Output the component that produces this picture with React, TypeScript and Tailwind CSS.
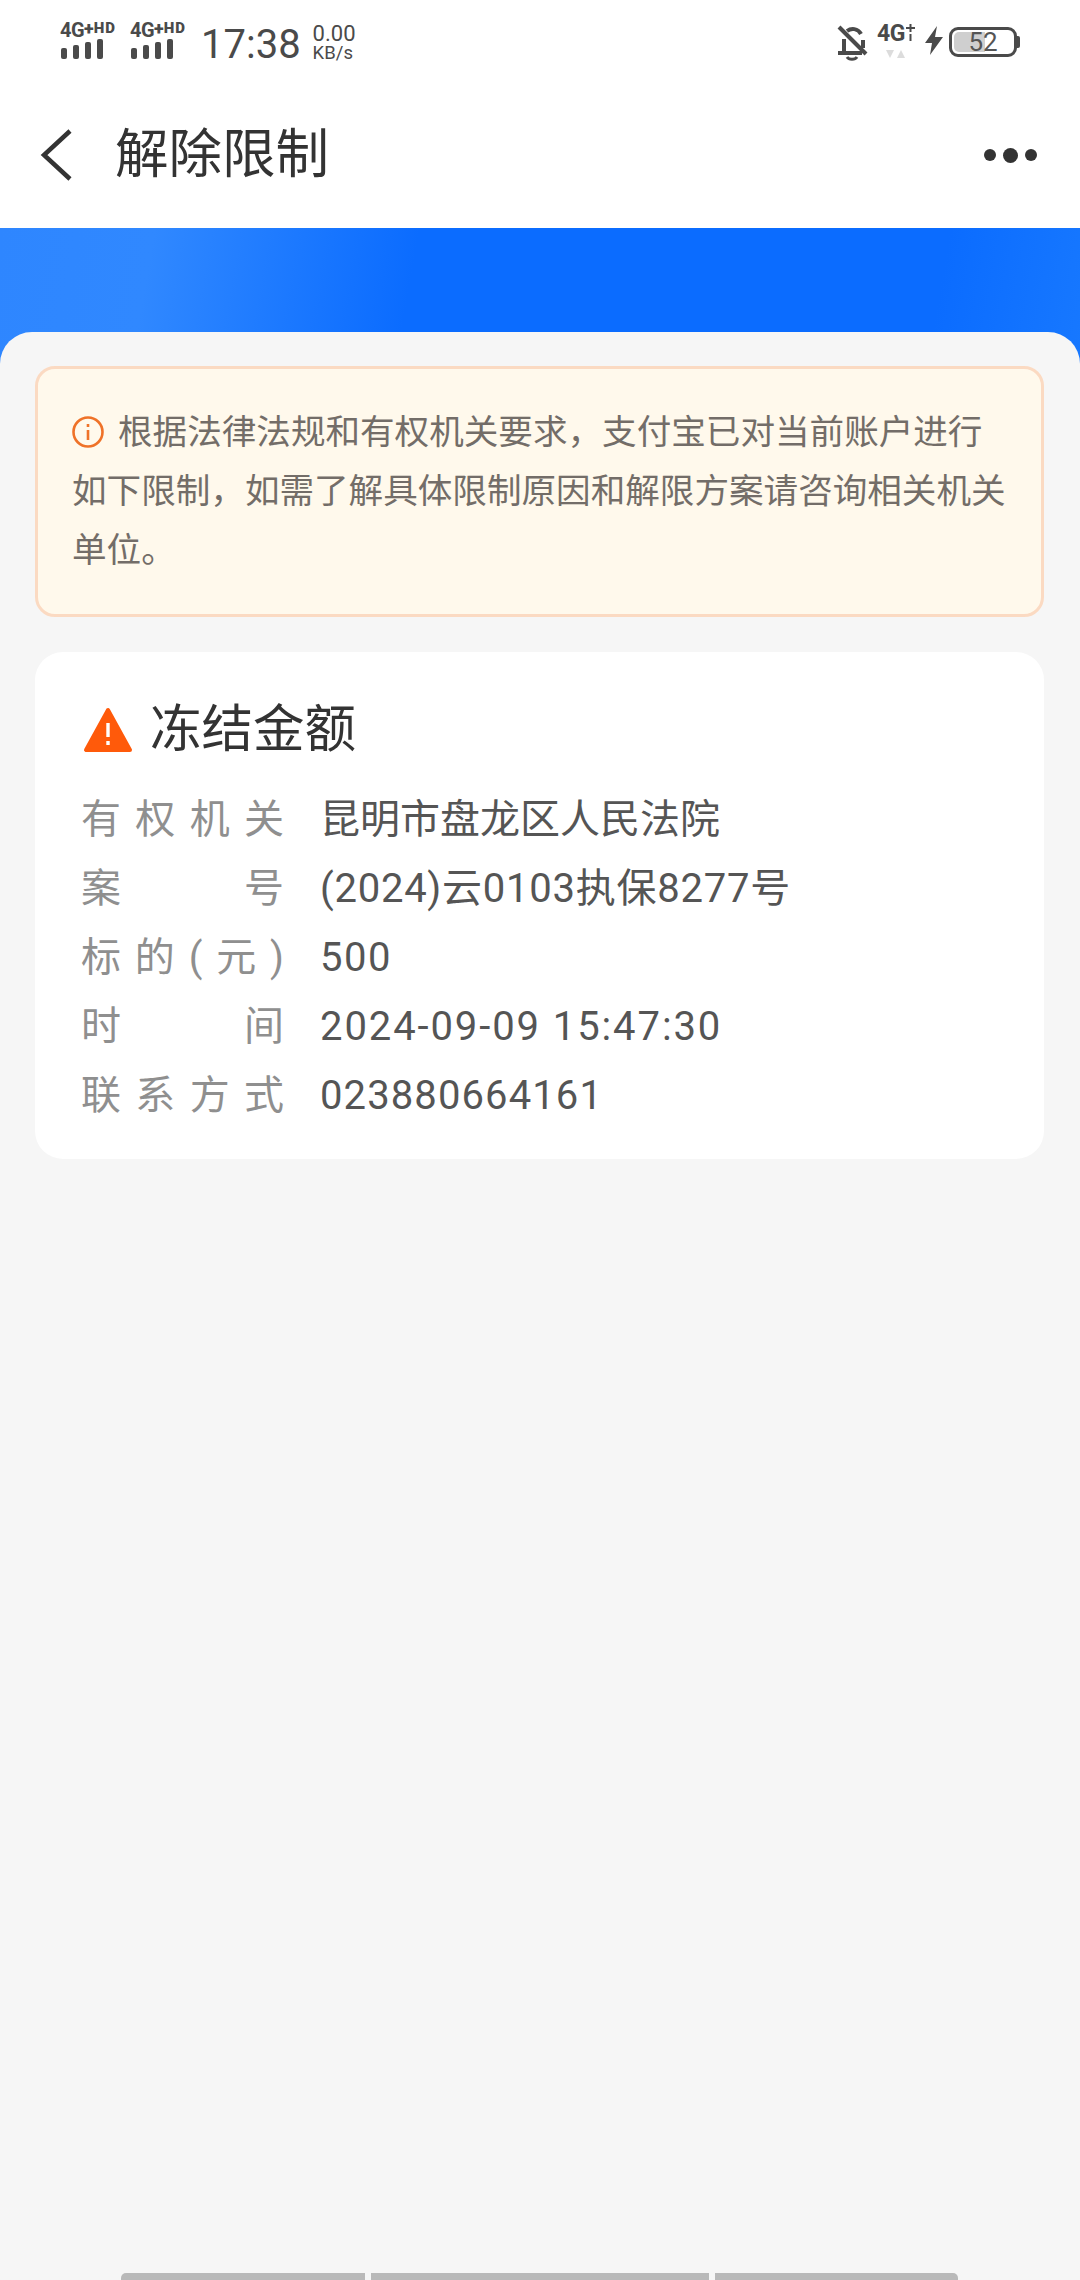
function SignalGroup() {
  const bars = ["h-[11px]", "h-[14px]", "h-[17px]", "h-[20px]"];
  return (
    <div className="flex w-[58px] flex-col">
      <div className="flex h-[17px] items-start leading-none text-[#4a4a4a]">
        <span className="text-[20px] font-bold leading-[17px] tracking-[-0.5px]">4G</span>
        <span className="-mt-[2px] text-[18px] font-black leading-[17px]">+</span>
        <span className="text-[15px] font-black leading-[12px] tracking-[1px]">HD</span>
      </div>
      <div className="ml-[1px] flex h-[20px] items-end gap-[6px]">
        {bars.map((bar, index) => (
          <div key={index} className={`w-[6px] rounded-[2px] bg-[#4a4a4a] ${bar}`} />
        ))}
      </div>
    </div>
  );
}

function StatusBar() {
  return (
    <div className="flex h-[80px] items-start justify-between pl-[60px] pr-[60px] pt-[22px] text-[#4a4a4a]">
      <div className="flex items-start">
        <SignalGroup />
        <div className="ml-[12px]">
          <SignalGroup />
        </div>
        <span className="ml-[13px] mt-[1px] text-[40px] leading-[44px]">17:38</span>
        <div className="ml-[12px] mt-[1px] flex flex-col leading-none">
          <span className="text-[22px] leading-[22px]">0.00</span>
          <span className="text-[18.500px] leading-[17px]">KB/s</span>
        </div>
      </div>
      <div className="flex items-start">
        <svg width="34" height="36" viewBox="0 0 34 36" className="mt-[3px]" fill="none" stroke="#4a4a4a" strokeWidth="4">
          <path d="M8 14v13M27 15v8M11 6c4-3 11-3 14 3" />
          <path d="M2 28h24" />
          <path d="M11 32c2 3 8 3 10 0" strokeWidth="3" />
          <path d="M3 2l27 27" />
        </svg>
        <div className="ml-[7px] mt-[2px] flex w-[40px] flex-col items-start">
          <div className="flex h-[20px] items-start">
            <span className="text-[23px] font-bold leading-[20px] tracking-[-0.5px]">4G</span>
            <svg width="9" height="18" viewBox="0 0 9 18" className="ml-[1px]">
              <path d="M3.500 0h2v3H9v2H5.500v3h-2V5H0V3h3.500zM3.500 10h2v7h-2z" fill="#4a4a4a" />
            </svg>
          </div>
          <svg width="20" height="9" viewBox="0 0 20 9" className="ml-[9px] mt-[6px]">
            <path d="M0 0h8L4 8zM11 8h8l-4-8z" fill="#dcdcdc" />
          </svg>
        </div>
        <svg width="19" height="30" viewBox="0 0 19 30" className="ml-[8px] mt-[4px]">
          <path d="M12 0L0 17h7L5 29l13-18h-8z" fill="#4a4a4a" />
        </svg>
        <div className="ml-[5px] mt-[5px] flex items-center">
          <div className="relative h-[30px] w-[68px] rounded-[9px] border-[3px] border-[#4a4a4a] p-[2px]">
            <div className="h-full w-[31px] rounded-l-[5px] bg-[#cfcfcf]" />
            <span className="absolute inset-0 flex items-center justify-center text-[26px] leading-none text-[#555555]">52</span>
          </div>
          <div className="h-[12px] w-[3px] rounded-r-[2px] bg-[#4a4a4a]" />
        </div>
      </div>
    </div>
  );
}

function Header() {
  return (
    <div className="flex h-[148px] items-center justify-between bg-white pl-[40px] pr-[43px] pt-[2px]">
      <div className="flex items-center">
        <svg width="32" height="52" viewBox="0 0 32 52" fill="none" stroke="#333333" strokeWidth="4.5">
          <path d="M30 2L4 26l26 24" />
        </svg>
        <span className="ml-[43px] text-[53.500px] leading-none text-[#333333]">解除限制</span>
      </div>
      <div className="flex items-center gap-[7px]">
        <div className="h-[12px] w-[12px] rounded-full bg-[#333333]" />
        <div className="h-[15px] w-[15px] rounded-full bg-[#333333]" />
        <div className="h-[12px] w-[12px] rounded-full bg-[#333333]" />
      </div>
    </div>
  );
}

function Notice() {
  return (
    <div className="rounded-[20px] border-[3px] border-[#fbdac2] bg-[#fff9ec] pb-[34px] pl-[34px] pr-[30px] pt-[34px] text-[34.600px] leading-[59px] text-[#736d68]">
      <svg width="32" height="32" viewBox="0 0 32 32" className="mr-[14px] inline-block align-[-4px]" fill="none" stroke="#ef7228" strokeWidth="2.6">
        <circle cx="16" cy="16" r="14.5" />
        <path d="M16 14v10M16 8v3" />
      </svg>
      根据法律法规和有权机关要求，支付宝已对当前账户进行如下限制，如需了解具体限制原因和解限方案请咨询相关机关单位。
    </div>
  );
}

function FreezeCard() {
  const rows = [
    { label: ["有", "权", "机", "关"], value: "昆明市盘龙区人民法院", tracking: "" },
    { label: ["案", "号"], value: "(2024)云0103执保8277号", tracking: "tracking-[0.75px]" },
    { label: ["标", "的", "(", "元", ")"], value: "500", tracking: "tracking-[1.5px]" },
    { label: ["时", "间"], value: "2024-09-09 15:47:30", tracking: "tracking-[1.9px]" },
    { label: ["联", "系", "方", "式"], value: "023880664161", tracking: "tracking-[1.1px]" },
  ];

  return (
    <div className="mt-[35px] rounded-[28px] bg-white pb-[29px] pl-[46px] pr-[40px] pt-[50px]">
      <div className="flex h-[56px] items-center">
        <svg width="50" height="46" viewBox="0 0 50 46" className="ml-[2px]">
          <path d="M25 3L3 43h44z" fill="#ff5a0a" stroke="#ff5a0a" strokeWidth="4" strokeLinejoin="round" />
          <path d="M25 16v14M25 34v4" stroke="#ffffff" strokeWidth="3.4" />
        </svg>
        <span className="ml-[17px] text-[51.500px] leading-none text-[#333333]">冻结金额</span>
      </div>
      <div className="mt-[27px] flex flex-col">
        {rows.map((row, index) => (
          <div key={index} className="flex h-[69px] items-center text-[40px] leading-none">
            <div className="flex w-[203px] shrink-0 justify-between text-[#8f8f8f]">
              {row.label.map((ch, i) => (
                <span key={i}>{ch}</span>
              ))}
            </div>
            <span className={`ml-[36px] text-[#555555] ${row.tracking}`}>{row.value}</span>
          </div>
        ))}
      </div>
    </div>
  );
}

export default function App() {
  return (
    <div className="flex h-[2280px] w-[1080px] flex-col overflow-hidden bg-white font-['Roboto','Noto_Sans_CJK_SC',sans-serif]">
      <StatusBar />
      <Header />
      <div className="h-[144px] shrink-0 bg-[linear-gradient(100deg,#2e86ff_0%,#3088ff_14%,#0b6cff_38%,#0b6cff_86%,#1778ff_100%)]" />
      <div className="-mt-[40px] flex flex-1 flex-col rounded-t-[32px] bg-[#f6f6f6] pl-[35px] pr-[36px] pt-[34px]">
        <Notice />
        <FreezeCard />
        <div className="-ml-[1px] mt-auto flex justify-center gap-[6px]">
          <div className="h-[7px] w-[244px] rounded-tl-[5px] bg-[#b9b9b9]" />
          <div className="h-[7px] w-[338px] bg-[#b9b9b9]" />
          <div className="h-[7px] w-[243px] rounded-tr-[5px] bg-[#b9b9b9]" />
        </div>
      </div>
    </div>
  );
}
